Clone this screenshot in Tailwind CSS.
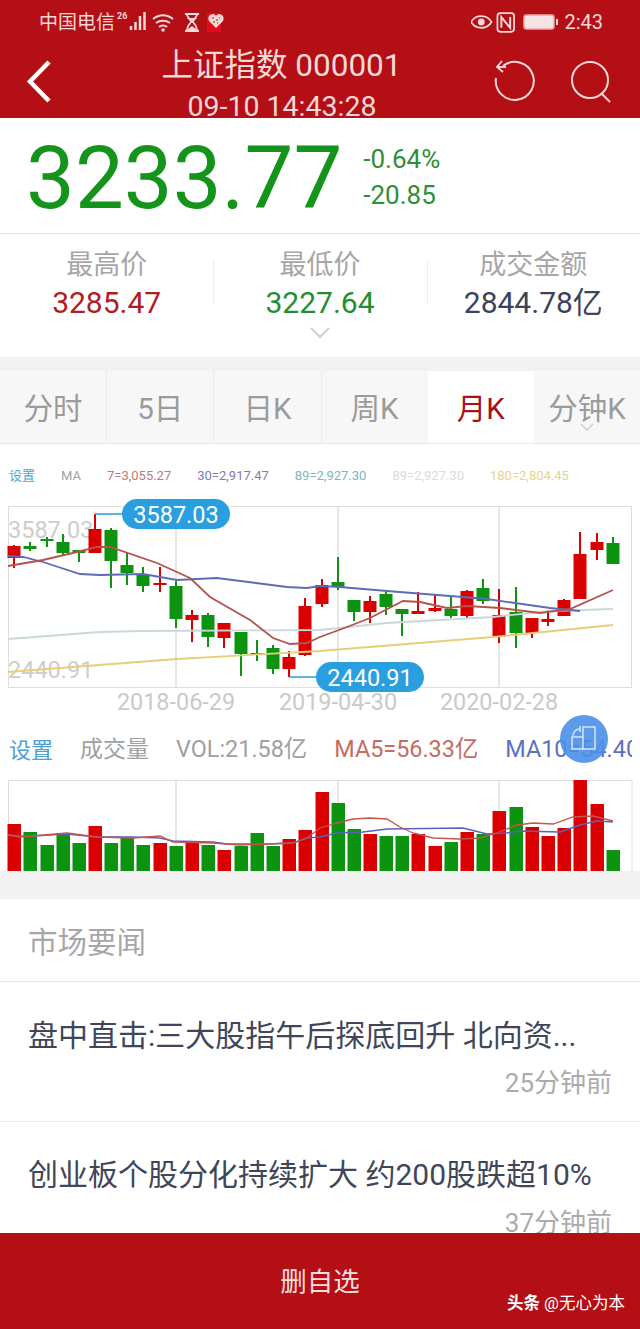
<!DOCTYPE html>
<html lang="zh">
  <head>
    <meta charset="UTF-8" />
    <meta name="viewport" content="width=device-width, initial-scale=1.0" />
    <title>上证指数</title>
    <script src="https://cdn.jsdelivr.net/npm/@tailwindcss/browser@4"></script>
  </head>
  <body class="bg-white font-['Roboto','Noto_Sans_CJK_SC',sans-serif]">
    <div class="flex flex-col h-[1329px] w-[640px] overflow-hidden">
      <!-- Header -->
      <div class="relative h-[118px] shrink-0 overflow-hidden bg-[#b40f15] text-[#f5d8d8]">
        <!-- Status bar -->
        <div class="flex items-center h-[44px] pl-[39px] pr-[37px]">
          <span class="text-[19px] leading-none">中国电信</span>
          <svg class="ml-[1px]" width="105" height="24" viewBox="0 0 105 24" fill="none" stroke="#f5d8d8">
            <text x="1" y="9" font-size="9" font-weight="700" fill="#f5d8d8" stroke="none">26</text>
            <path d="M15 20v-4M19.500 20v-8M24 20V6M28.500 20V2" stroke-width="2.500" />
            <path d="M37 9c6-5 14-5 20 0M40 13c4-3 10-3 14 0M43 17c2-2 6-2 8 0" stroke-width="2" />
            <circle cx="47" cy="20" r="1.800" fill="#f5d8d8" stroke="none" />
            <path d="M69 4h14M69 21h14M71 4c0 6 10 7 10 17M81 4c0 6-10 7-10 17" stroke-width="1.800" />
            <path d="M71 8h10l-5 5zM71 20l5-4 5 4z" fill="#f5d8d8" stroke="none" />
            <rect x="91" y="3" width="18" height="19" fill="#e00d18" stroke="none" />
          </svg>
          <svg class="absolute left-[207px] top-[12px]" width="18" height="18" viewBox="0 0 18 18">
            <path d="M9 16 2 9C0 5 3 2 6 2c1.500 0 2.500 1 3 2 .5-1 1.500-2 3-2 3 0 6 3 4 7z" fill="#f3d5d5" />
            <path d="M5 6h2M9 8h2M12 6h1M6 10h2M10 11h1" stroke="#b40f15" stroke-width="1.200" />
          </svg>
          <svg class="ml-auto" width="93" height="24" viewBox="0 0 95 24" fill="none" stroke="#f5d8d8">
            <path d="M0 12c5-8 16-8 21 0-5 8-16 8-21 0z" stroke-width="1.800" />
            <circle cx="10.500" cy="12" r="3.500" fill="#f5d8d8" stroke="none" />
            <rect x="27" y="3" width="17" height="19" rx="3" stroke-width="1.800" />
            <path d="M31 18V7l9 11V7" stroke-width="2" />
          </svg>
          <svg class="absolute left-[523px] top-[13px]" width="36" height="18" viewBox="0 0 36 18">
            <rect x="1" y="2" width="30" height="14" rx="2.500" fill="#f5e3e3" stroke="#e9a9a9" stroke-width="1.500" />
            <rect x="33" y="6" width="2" height="6" fill="#f5d8d8" />
          </svg>
          <span class="text-[20px] leading-none">2:43</span>
        </div>
        <!-- Nav -->
        <svg class="absolute left-[26px] top-[60px]" width="27" height="43" viewBox="0 0 27 43" fill="none" stroke="#fff" stroke-width="4.500">
          <path d="M23 2 4 21.500 23 41" />
        </svg>
        <div class="absolute left-0 top-[46px] w-[563px] text-center text-[31.500px] leading-[40px] whitespace-nowrap">上证指数 000001</div>
        <div class="absolute left-0 top-[89px] w-[564px] text-center text-[28.500px] leading-[36px] whitespace-nowrap">09-10 14:43:28</div>
        <svg class="absolute left-[492px] top-[58px]" width="46" height="46" viewBox="0 0 46 46" fill="none" stroke="#f5d8d8" stroke-width="2">
          <path d="M11 8a19 19 0 1 1-7 12" />
          <path d="M5 9h9M10 3 5 9l6 5" stroke-width="1.800" />
        </svg>
        <svg class="absolute left-[569px] top-[60px]" width="44" height="44" viewBox="0 0 44 44" fill="none" stroke="#f5d8d8" stroke-width="2">
          <circle cx="21" cy="20" r="18" />
          <path d="m32 33 9 9" />
        </svg>
      </div>

      <!-- Price -->
      <div class="flex items-center gap-[21px] h-[116px] shrink-0 pl-[26px] border-b border-[#e6e6e6]">
        <span class="text-[87px] leading-none text-[#14941a] mt-[6px]">3233.77</span>
        <div class="flex flex-col text-[26px] leading-[36px] text-[#2e8f38] mt-[3px]">
          <span>-0.64%</span>
          <span>-20.85</span>
        </div>
      </div>

      <!-- High / low / turnover -->
      <div class="relative grid grid-cols-3 h-[123px] shrink-0 pt-[13px] text-center">
        <div class="flex flex-col">
          <span class="text-[27px] leading-[36px] text-[#a6a6a6]">最高价</span>
          <span class="text-[30px] leading-[40px] text-[#b01c22]">3285.47</span>
        </div>
        <div class="flex flex-col">
          <span class="text-[27px] leading-[36px] text-[#a6a6a6]">最低价</span>
          <span class="text-[30px] leading-[40px] text-[#1f8f32]">3227.64</span>
        </div>
        <div class="flex flex-col">
          <span class="text-[27px] leading-[36px] text-[#a6a6a6]">成交金额</span>
          <span class="text-[30px] leading-[40px] text-[#3c4358]">2844.78亿</span>
        </div>
        <div class="absolute left-[213px] top-[27px] h-[44px] w-px bg-[#eeeeee]"></div>
        <div class="absolute left-[427px] top-[27px] h-[44px] w-px bg-[#eeeeee]"></div>
        <svg class="absolute left-[309px] top-[92px]" width="22" height="14" viewBox="0 0 22 14" fill="none" stroke="#cfcfcf" stroke-width="2">
          <path d="m2 2 9 9 9-9" />
        </svg>
      </div>
      <div class="h-[14px] shrink-0 bg-[#f1f1f1]"></div>

      <!-- Period tabs -->
      <div class="flex h-[73px] shrink-0 pt-0 border-b border-[#e8e8e8] text-[29.500px] text-[#9b9b9b] bg-[#f7f7f7]">
        <div class="flex flex-1 items-center justify-center pt-[5px] border-r border-[#ececec]">分时</div>
        <div class="flex flex-1 items-center justify-center pt-[5px] border-r border-[#ececec]">5日</div>
        <div class="flex flex-1 items-center justify-center pt-[5px] border-r border-[#ececec]">日K</div>
        <div class="flex flex-1 items-center justify-center pt-[5px]">周K</div>
        <div class="flex flex-1 items-center justify-center pt-[5px] bg-white text-[#a5121a]">月K</div>
        <div class="relative flex flex-1 items-center justify-center pt-[5px] whitespace-nowrap">
          分钟K
          <svg class="absolute left-[46px] top-[52px]" width="14" height="9" viewBox="0 0 14 9" fill="none" stroke="#cfcfcf" stroke-width="1.500">
            <path d="m1 1 6 6 6-6" />
          </svg>
        </div>
      </div>

      <!-- K line chart -->
      <div class="relative h-[427px] shrink-0">
        <div class="flex items-center gap-[26px] h-[55px] pl-[9px] pt-[9px] text-[13px] whitespace-nowrap">
          <span class="text-[#4ea5d3]">设置</span>
          <span class="text-[#a3a3a3]">MA</span>
          <span class="text-[#bd7d76]">7=3,055.27</span>
          <span class="text-[#7a80b5]">30=2,917.47</span>
          <span class="text-[#7db6be]">89=2,927.30</span>
          <span class="text-[#d6dde1]">89=2,927.30</span>
          <span class="text-[#e9d28a]">180=2,804.45</span>
        </div>
        <svg id="kline" class="block" width="640" height="217" viewBox="0 499 640 217" fill="none">
          <rect x="8.500" y="506.500" width="623" height="181" stroke="#dedede" />
          <path d="M176 507v180M338 507v180M499 507v180" stroke="#dedede" stroke-width="1.500" />
          <text x="8" y="538" font-size="23.500" fill="#cdcdcd">3587.03</text>
          <text x="8" y="678" font-size="23.500" fill="#cdcdcd">2440.91</text>
          <g id="candles"></g>
          <polyline points="8,639 100,632 143,631 320,630 387,623 493,617 550,611 613,609" stroke="#c9d8da" stroke-width="1.800" />
          <polyline points="8,672 177,659 320,651 493,637 613,625" stroke="#e8cd78" stroke-width="1.800" />
          <polyline points="8,556 23,557 43,562 80,574 100,575 143,574 177,580 217,578 287,587 307,588 320,586 340,587 387,591 450,596 487,599 550,608 580,611" stroke="#5b6bb5" stroke-width="1.800" />
          <polyline points="8,566 43,560 77,552 97,547 110,547 157,563 190,578 210,597 250,620 273,638 290,644 307,643 320,637 347,627 370,618 403,601 420,602 447,608 467,606 500,608 540,613 570,609 613,590" stroke="#b5524c" stroke-width="1.800" />
          <path d="M95 514h28M289 677h28" stroke="#2a9fe0" stroke-width="1.500" />
          <rect x="122" y="499" width="108" height="30" rx="15" fill="#2a9fe0" />
          <text x="176" y="523" font-size="23.500" fill="#fff" text-anchor="middle">3587.03</text>
          <rect x="316" y="662" width="108" height="30" rx="15" fill="#2a9fe0" />
          <text x="370" y="686" font-size="23.500" fill="#fff" text-anchor="middle">2440.91</text>
          <text x="176" y="710" font-size="23.400" fill="#c9c9c9" text-anchor="middle">2018-06-29</text>
          <text x="338" y="710" font-size="23.400" fill="#c9c9c9" text-anchor="middle">2019-04-30</text>
          <text x="499" y="710" font-size="23.400" fill="#c9c9c9" text-anchor="middle">2020-02-28</text>
        </svg>

        <!-- Volume legend -->
        <div class="flex items-center gap-[27px] h-[64px] w-[632px] pl-[9px] pt-[4px] overflow-hidden text-[23.400px] whitespace-nowrap">
          <span class="text-[22px] text-[#4ea0d0]">设置</span>
          <span class="text-[23px] text-[#a0a0a0]">成交量</span>
          <span class="text-[#a0a0a0]">VOL:21.58亿</span>
          <span class="text-[#c56c62]">MA5=56.33亿</span>
          <span class="text-[#5b70c2]">MA10=54.40</span>
        </div>
        <svg id="volume" class="block" width="640" height="91" viewBox="0 780 640 91" fill="none">
          <path d="M632 871V780.500H8.500V871" stroke="#dedede" />
          <path d="M176 781v90M338 781v90M499 781v90" stroke="#dedede" stroke-width="1.500" />
          <g id="bars"></g>
          <polyline points="8,835 20,836 33,836 67,834 97,837 133,837 160,838 173,841 213,842 227,844 267,844 293,843 307,838 320,837 337,833 363,832 387,829 463,828 487,834 507,833 520,831 560,832 580,825 597,821 613,822" stroke="#5b5fc0" stroke-width="1.500" />
          <polyline points="8,835 20,837 67,833 97,837 133,838 160,836 173,842 213,843 240,845 267,844 293,843 307,838 320,828 337,823 353,819 370,818 387,819 400,827 413,833 433,838 460,839 480,838 497,833 517,825 533,823 553,824 573,817 593,816 613,821" stroke="#c7534c" stroke-width="1.300" />
        </svg>

        <!-- Floating button -->
        <div class="absolute left-[560px] top-[271px] flex items-center justify-center w-[48px] h-[48px] rounded-full bg-[#4a90e8]/90">
          <svg width="30" height="30" viewBox="0 0 30 30" fill="none" stroke="#d4e6fb" stroke-width="1.500">
            <rect x="14" y="3" width="12" height="22" />
            <path d="M14 13H3v12h11M4 12c0-4 3-7 7-7M11 2v6" />
          </svg>
        </div>
      </div>

      <!-- News -->
      <div class="flex-1 min-h-0 overflow-hidden bg-[#f1f1f1] pt-[28px]">
        <div class="h-full bg-white">
          <div class="flex items-center h-[83px] pt-[6px] pl-[28px] border-b border-[#e6e6e6] text-[29.500px] text-[#a6a6a6]">市场要闻</div>
          <div class="h-[140px] px-[28px] pt-[31px] border-b border-[#ececec]">
            <p class="text-[30px] leading-[46px] text-[#3f4659] whitespace-nowrap">盘中直击:三大股指午后探底回升 北向资...</p>
            <p class="text-right text-[26px] leading-[48px] text-[#ababab]">25分钟前</p>
          </div>
          <div class="h-[139px] px-[28px] pt-[30px]">
            <p class="text-[30px] leading-[46px] text-[#3f4659] whitespace-nowrap">创业板个股分化持续扩大 约200股跌超10%</p>
            <p class="text-right text-[26px] leading-[50px] text-[#ababab]">37分钟前</p>
          </div>
        </div>
      </div>

      <!-- Bottom action -->
      <div class="relative flex items-center justify-center h-[96px] shrink-0 pt-px bg-[#b40f15] text-[26.500px] text-[#f7dede]">
        删自选
        <span class="absolute left-[507px] top-[61px] text-[16.500px] leading-5 text-white whitespace-nowrap"><b>头条</b> @无心为本</span>
      </div>
    </div>

    <script>
      const RED = "#db0000";
      const GREEN = "#0c930f";
      // x, wick top, wick bottom, body top, body bottom, colour, volume bar top
      const candles = [
        [14, 545, 568, 546, 558, RED, 824],
        [30, 542, 551, 546, 549, GREEN, 832],
        [47, 537, 547, 539, 541, GREEN, 845],
        [63, 534, 555, 542, 553, GREEN, 833],
        [79, 550, 562, 550, 553, GREEN, 843],
        [95, 514, 553, 529, 553, RED, 826],
        [111, 528, 588, 530, 561, GREEN, 843],
        [127, 552, 585, 565, 573, GREEN, 838],
        [143, 567, 592, 575, 586, GREEN, 845],
        [160, 567, 592, 583, 585, RED, 843],
        [176, 581, 628, 586, 619, GREEN, 846],
        [192, 610, 642, 615, 620, RED, 843],
        [208, 613, 647, 615, 637, GREEN, 845],
        [224, 623, 648, 623, 638, RED, 850],
        [241, 632, 676, 632, 654, GREEN, 846],
        [257, 640, 661, 653, 655, GREEN, 833],
        [273, 645, 674, 648, 669, GREEN, 846],
        [289, 651, 677, 657, 669, RED, 839],
        [305, 598, 656, 606, 655, RED, 830],
        [322, 579, 607, 585, 604, RED, 792],
        [338, 557, 590, 582, 587, GREEN, 803],
        [354, 600, 621, 600, 612, GREEN, 829],
        [370, 596, 623, 601, 612, RED, 834],
        [386, 592, 615, 594, 607, GREEN, 836],
        [402, 609, 636, 609, 614, GREEN, 836],
        [418, 592, 614, 611, 614, RED, 834],
        [435, 595, 612, 608, 611, RED, 846],
        [451, 597, 618, 609, 616, GREEN, 842],
        [467, 590, 618, 591, 616, RED, 832],
        [483, 579, 604, 588, 601, GREEN, 834],
        [499, 589, 643, 615, 637, RED, 811],
        [516, 587, 648, 612, 633, GREEN, 807],
        [532, 618, 638, 618, 633, RED, 827],
        [548, 610, 626, 619, 622, RED, 836],
        [564, 599, 616, 600, 616, RED, 828],
        [580, 532, 599, 554, 599, RED, 778],
        [597, 533, 560, 542, 550, RED, 804],
        [613, 537, 564, 543, 564, GREEN, 850],
      ];

      document.getElementById("candles").innerHTML = candles
        .map(
          ([x, hi, lo, top, bottom, color]) => `
            <path d="M${x} ${hi}V${lo}" stroke="${color}" stroke-width="2" />
            <rect x="${x - 6.5}" y="${top}" width="13" height="${bottom - top}" fill="${color}" />`
        )
        .join("");

      document.getElementById("bars").innerHTML = candles
        .map(
          ([x, , , , , color, vol]) => `
            <rect x="${x - 6.5}" y="${vol}" width="13.5" height="${871 - vol}" fill="${color}" />`
        )
        .join("");
    </script>
  </body>
</html>
